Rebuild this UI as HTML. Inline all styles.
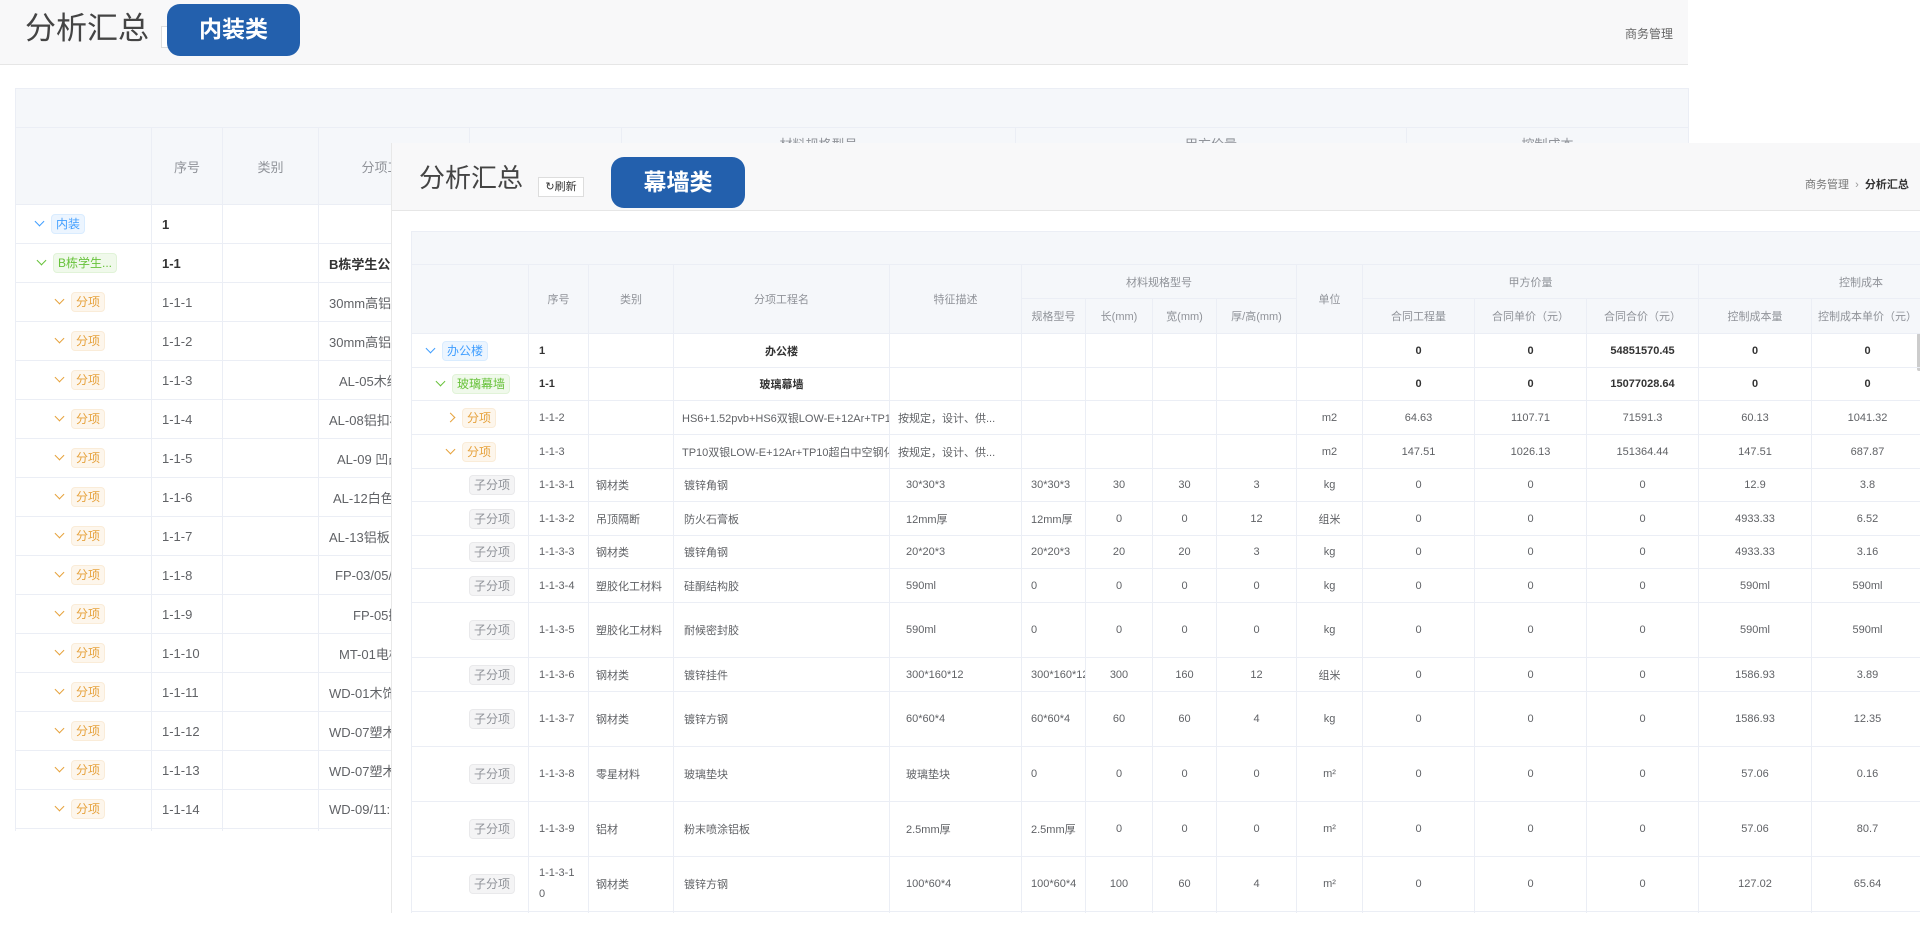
<!DOCTYPE html>
<html><head><meta charset="utf-8">
<style>
*{box-sizing:border-box;margin:0;padding:0}
body{width:1920px;height:928px;overflow:hidden;background:#fff;font-family:"Liberation Sans","Noto Sans CJK SC",sans-serif;position:relative}
.abs{position:absolute}
table{border-collapse:collapse;table-layout:fixed;position:absolute}
td{border:1px solid #ebeef5;text-align:center;vertical-align:middle;white-space:nowrap;overflow:hidden;color:#606266}
.hd td{background:#f5f7fa;color:#909399}
.tag{display:inline-block;border-radius:4px;border:1px solid;padding:0 4px;line-height:18px;font-size:12px}
.tb{background:#ecf5ff;border-color:#d9ecff;color:#409eff}
.tg{background:#f0f9eb;border-color:#e1f3d8;color:#67c23a}
.to{background:#fdf6ec;border-color:#faecd8;color:#e6a23c}
.ti{background:#f4f4f5;border-color:#e9e9eb;color:#909399}
.arr{display:inline-block;width:7px;height:7px;border-right:1.5px solid;border-bottom:1.5px solid;transform:rotate(45deg);margin-right:8px;position:relative;top:-3px}
.arr.r{transform:rotate(-45deg);top:-1px}
.l{text-align:left;padding-left:10px}
#back td{font-size:13px}
#front td{font-size:11px}
.b{font-weight:bold;color:#333}
.tp{vertical-align:top;padding-top:6px}
</style></head><body>

<!-- BACK PANEL -->
<div class="abs" style="left:0;top:0;width:1688px;height:65px;background:#f8f8f9;border-bottom:1px solid #e6e6e6"></div>
<div class="abs" style="left:25px;top:11px;font-size:31px;color:#444;line-height:36px">分析汇总</div>
<div class="abs" style="left:161px;top:26px;width:10px;height:22px;border:1px solid #ddd;background:#fff"></div>
<div class="abs" style="left:167px;top:4px;width:133px;height:52px;background:#2360ad;border-radius:13px;color:#fff;font-size:23px;font-weight:bold;text-align:center;line-height:50px">内装类</div>
<div class="abs" style="left:1625px;top:25px;font-size:12px;color:#666">商务管理</div>

<table id="back" style="left:15px;top:88px;width:1673px">
<colgroup><col style="width:136px"><col style="width:71px"><col style="width:96px"><col style="width:151px"><col style="width:152px"><col style="width:319px"><col style="width:75px"><col style="width:391px"><col style="width:282px"></colgroup>
<tr class="hd" style="height:39px"><td colspan="9" style="border-bottom:1px solid #ebeef5"></td></tr>
<tr class="hd" style="height:38px"><td rowspan="2"></td><td rowspan="2">序号</td><td rowspan="2">类别</td><td rowspan="2">分项工程名</td><td rowspan="2"></td><td colspan="2" class="tp">材料规格型号</td><td class="tp">甲方价量</td><td class="tp">控制成本</td></tr>
<tr class="hd" style="height:39px"><td colspan="2"></td><td></td><td></td></tr>
<tr style="height:39px"><td class="l" style="padding-left:20px"><span class="arr" style="color:#409eff"></span><span class="tag tb">内装</span></td><td class="l b">1</td><td></td><td class="b" style="text-align:right">内装</td><td></td><td></td><td></td><td></td><td></td></tr>
<tr style="height:39px"><td class="l" style="padding-left:22px"><span class="arr" style="color:#67c23a"></span><span class="tag tg">B栋学生...</span></td><td class="l b">1-1</td><td></td><td class="b l">B栋学生公寓</td><td></td><td></td><td></td><td></td><td></td></tr>
<tr style="height:39px"><td class="l" style="padding-left:40px"><span class="arr" style="color:#e6a23c"></span><span class="tag to">分项</span></td><td class="l">1-1-1</td><td></td><td class="l">30mm高铝板</td><td></td><td></td><td></td><td></td><td></td></tr>
<tr style="height:39px"><td class="l" style="padding-left:40px"><span class="arr" style="color:#e6a23c"></span><span class="tag to">分项</span></td><td class="l">1-1-2</td><td></td><td class="l">30mm高铝板</td><td></td><td></td><td></td><td></td><td></td></tr>
<tr style="height:39px"><td class="l" style="padding-left:40px"><span class="arr" style="color:#e6a23c"></span><span class="tag to">分项</span></td><td class="l">1-1-3</td><td></td><td class="l" style="padding-left:20px">AL-05木纹</td><td></td><td></td><td></td><td></td><td></td></tr>
<tr style="height:39px"><td class="l" style="padding-left:40px"><span class="arr" style="color:#e6a23c"></span><span class="tag to">分项</span></td><td class="l">1-1-4</td><td></td><td class="l">AL-08铝扣板</td><td></td><td></td><td></td><td></td><td></td></tr>
<tr style="height:39px"><td class="l" style="padding-left:40px"><span class="arr" style="color:#e6a23c"></span><span class="tag to">分项</span></td><td class="l">1-1-5</td><td></td><td class="l" style="padding-left:18px">AL-09 凹凸</td><td></td><td></td><td></td><td></td><td></td></tr>
<tr style="height:39px"><td class="l" style="padding-left:40px"><span class="arr" style="color:#e6a23c"></span><span class="tag to">分项</span></td><td class="l">1-1-6</td><td></td><td class="l" style="padding-left:14px">AL-12白色</td><td></td><td></td><td></td><td></td><td></td></tr>
<tr style="height:39px"><td class="l" style="padding-left:40px"><span class="arr" style="color:#e6a23c"></span><span class="tag to">分项</span></td><td class="l">1-1-7</td><td></td><td class="l">AL-13铝板</td><td></td><td></td><td></td><td></td><td></td></tr>
<tr style="height:39px"><td class="l" style="padding-left:40px"><span class="arr" style="color:#e6a23c"></span><span class="tag to">分项</span></td><td class="l">1-1-8</td><td></td><td class="l" style="padding-left:16px">FP-03/05/</td><td></td><td></td><td></td><td></td><td></td></tr>
<tr style="height:39px"><td class="l" style="padding-left:40px"><span class="arr" style="color:#e6a23c"></span><span class="tag to">分项</span></td><td class="l">1-1-9</td><td></td><td class="l" style="padding-left:34px">FP-05抛</td><td></td><td></td><td></td><td></td><td></td></tr>
<tr style="height:39px"><td class="l" style="padding-left:40px"><span class="arr" style="color:#e6a23c"></span><span class="tag to">分项</span></td><td class="l">1-1-10</td><td></td><td class="l" style="padding-left:20px">MT-01电梯</td><td></td><td></td><td></td><td></td><td></td></tr>
<tr style="height:39px"><td class="l" style="padding-left:40px"><span class="arr" style="color:#e6a23c"></span><span class="tag to">分项</span></td><td class="l">1-1-11</td><td></td><td class="l">WD-01木饰</td><td></td><td></td><td></td><td></td><td></td></tr>
<tr style="height:39px"><td class="l" style="padding-left:40px"><span class="arr" style="color:#e6a23c"></span><span class="tag to">分项</span></td><td class="l">1-1-12</td><td></td><td class="l">WD-07塑木</td><td></td><td></td><td></td><td></td><td></td></tr>
<tr style="height:39px"><td class="l" style="padding-left:40px"><span class="arr" style="color:#e6a23c"></span><span class="tag to">分项</span></td><td class="l">1-1-13</td><td></td><td class="l">WD-07塑木</td><td></td><td></td><td></td><td></td><td></td></tr>
<tr style="height:39px"><td class="l" style="padding-left:40px"><span class="arr" style="color:#e6a23c"></span><span class="tag to">分项</span></td><td class="l">1-1-14</td><td></td><td class="l">WD-09/11:</td><td></td><td></td><td></td><td></td><td></td></tr>
<tr style="height:15px"><td></td><td></td><td></td><td></td><td></td><td></td><td></td><td></td><td></td></tr>
</table>
<div class="abs" style="left:0;top:831px;width:1700px;height:97px;background:#fff"></div>

<!-- FRONT PANEL -->
<div class="abs" style="left:391px;top:143px;width:1529px;height:771px;background:#fff;border-left:1px solid #e8e8e8;overflow:hidden">
 <div class="abs" style="left:0;top:0;width:1529px;height:68px;background:#f8f8f9;border-bottom:1px solid #e6e6e6"></div>
 <div class="abs" style="left:27px;top:19px;font-size:26px;color:#444;line-height:32px">分析汇总</div>
 <div class="abs" style="left:146px;top:34px;width:46px;height:20px;border:1px solid #ddd;background:#fff;font-size:11px;color:#333;line-height:18px;text-align:center">&#x21bb;刷新</div>
 <div class="abs" style="left:219px;top:14px;width:134px;height:51px;background:#2360ad;border-radius:13px;color:#fff;font-size:23px;font-weight:bold;text-align:center;line-height:50px">幕墙类</div>
 <div class="abs" style="left:1413px;top:33px;font-size:11px;color:#777">商务管理&nbsp;&nbsp;<span style="color:#999">›</span>&nbsp;&nbsp;<b style="color:#333">分析汇总</b></div>
 <div class="abs" style="left:1525px;top:190px;width:4px;height:38px;background:#ccc;border-radius:2px"></div>

<table id="front" style="left:19px;top:88px;width:1620px">
<colgroup><col style="width:117px"><col style="width:60px"><col style="width:85px"><col style="width:216px"><col style="width:132px"><col style="width:64px"><col style="width:67px"><col style="width:64px"><col style="width:80px"><col style="width:66px"><col style="width:112px"><col style="width:112px"><col style="width:112px"><col style="width:113px"><col style="width:112px"><col style="width:108px"></colgroup>
<tr class="hd" style="height:33px"><td colspan="16"></td></tr>
<tr class="hd" style="height:34px"><td rowspan="2"></td><td rowspan="2">序号</td><td rowspan="2">类别</td><td rowspan="2">分项工程名</td><td rowspan="2">特征描述</td><td colspan="4">材料规格型号</td><td rowspan="2">单位</td><td colspan="3">甲方价量</td><td colspan="3" style="text-align:left;padding-left:140px">控制成本</td></tr>
<tr class="hd" style="height:35px"><td>规格型号</td><td>长(mm)</td><td>宽(mm)</td><td>厚/高(mm)</td><td>合同工程量</td><td>合同单价（元）</td><td>合同合价（元）</td><td>控制成本量</td><td>控制成本单价（元）</td><td></td></tr>
<tr style="height:34px"><td class="l" style="padding-left:15px"><span class="arr" style="color:#409eff"></span><span class="tag tb">办公楼</span></td><td class="l b">1</td><td></td><td class="b">办公楼</td><td></td><td></td><td></td><td></td><td></td><td></td><td class="b">0</td><td class="b">0</td><td class="b">54851570.45</td><td class="b">0</td><td class="b">0</td><td></td></tr>
<tr style="height:33px"><td class="l" style="padding-left:25px"><span class="arr" style="color:#67c23a"></span><span class="tag tg">玻璃幕墙</span></td><td class="l b">1-1</td><td></td><td class="b">玻璃幕墙</td><td></td><td></td><td></td><td></td><td></td><td></td><td class="b">0</td><td class="b">0</td><td class="b">15077028.64</td><td class="b">0</td><td class="b">0</td><td></td></tr>
<tr style="height:34px"><td class="l" style="padding-left:35px"><span class="arr r" style="color:#e6a23c"></span><span class="tag to">分项</span></td><td class="l">1-1-2</td><td></td><td class="l" style="padding-left:8px">HS6+1.52pvb+HS6双银LOW-E+12Ar+TP10</td><td class="l" style="padding-left:8px">按规定，设计、供...</td><td></td><td></td><td></td><td></td><td>m2</td><td>64.63</td><td>1107.71</td><td>71591.3</td><td>60.13</td><td>1041.32</td><td></td></tr>
<tr style="height:34px"><td class="l" style="padding-left:35px"><span class="arr" style="color:#e6a23c"></span><span class="tag to">分项</span></td><td class="l">1-1-3</td><td></td><td class="l" style="padding-left:8px">TP10双银LOW-E+12Ar+TP10超白中空钢化</td><td class="l" style="padding-left:8px">按规定，设计、供...</td><td></td><td></td><td></td><td></td><td>m2</td><td>147.51</td><td>1026.13</td><td>151364.44</td><td>147.51</td><td>687.87</td><td></td></tr>
<tr style="height:33px"><td class="l" style="padding-left:57px"><span class="tag ti">子分项</span></td><td class="l">1-1-3-1</td><td class="l" style="padding-left:7px">钢材类</td><td class="l">镀锌角钢</td><td class="l" style="padding-left:16px">30*30*3</td><td class="l" style="padding-left:9px">30*30*3</td><td>30</td><td>30</td><td>3</td><td>kg</td><td>0</td><td>0</td><td>0</td><td>12.9</td><td>3.8</td><td></td></tr>
<tr style="height:34px"><td class="l" style="padding-left:57px"><span class="tag ti">子分项</span></td><td class="l">1-1-3-2</td><td class="l" style="padding-left:7px">吊顶隔断</td><td class="l">防火石膏板</td><td class="l" style="padding-left:16px">12mm厚</td><td class="l" style="padding-left:9px">12mm厚</td><td>0</td><td>0</td><td>12</td><td>组米</td><td>0</td><td>0</td><td>0</td><td>4933.33</td><td>6.52</td><td></td></tr>
<tr style="height:33px"><td class="l" style="padding-left:57px"><span class="tag ti">子分项</span></td><td class="l">1-1-3-3</td><td class="l" style="padding-left:7px">钢材类</td><td class="l">镀锌角钢</td><td class="l" style="padding-left:16px">20*20*3</td><td class="l" style="padding-left:9px">20*20*3</td><td>20</td><td>20</td><td>3</td><td>kg</td><td>0</td><td>0</td><td>0</td><td>4933.33</td><td>3.16</td><td></td></tr>
<tr style="height:34px"><td class="l" style="padding-left:57px"><span class="tag ti">子分项</span></td><td class="l">1-1-3-4</td><td class="l" style="padding-left:7px">塑胶化工材料</td><td class="l">硅酮结构胶</td><td class="l" style="padding-left:16px">590ml</td><td class="l" style="padding-left:9px">0</td><td>0</td><td>0</td><td>0</td><td>kg</td><td>0</td><td>0</td><td>0</td><td>590ml</td><td>590ml</td><td></td></tr>
<tr style="height:55px"><td class="l" style="padding-left:57px"><span class="tag ti">子分项</span></td><td class="l">1-1-3-5</td><td class="l" style="padding-left:7px">塑胶化工材料</td><td class="l">耐候密封胶</td><td class="l" style="padding-left:16px">590ml</td><td class="l" style="padding-left:9px">0</td><td>0</td><td>0</td><td>0</td><td>kg</td><td>0</td><td>0</td><td>0</td><td>590ml</td><td>590ml</td><td></td></tr>
<tr style="height:34px"><td class="l" style="padding-left:57px"><span class="tag ti">子分项</span></td><td class="l">1-1-3-6</td><td class="l" style="padding-left:7px">钢材类</td><td class="l">镀锌挂件</td><td class="l" style="padding-left:16px">300*160*12</td><td class="l" style="padding-left:9px">300*160*12</td><td>300</td><td>160</td><td>12</td><td>组米</td><td>0</td><td>0</td><td>0</td><td>1586.93</td><td>3.89</td><td></td></tr>
<tr style="height:55px"><td class="l" style="padding-left:57px"><span class="tag ti">子分项</span></td><td class="l">1-1-3-7</td><td class="l" style="padding-left:7px">钢材类</td><td class="l">镀锌方钢</td><td class="l" style="padding-left:16px">60*60*4</td><td class="l" style="padding-left:9px">60*60*4</td><td>60</td><td>60</td><td>4</td><td>kg</td><td>0</td><td>0</td><td>0</td><td>1586.93</td><td>12.35</td><td></td></tr>
<tr style="height:55px"><td class="l" style="padding-left:57px"><span class="tag ti">子分项</span></td><td class="l">1-1-3-8</td><td class="l" style="padding-left:7px">零星材料</td><td class="l">玻璃垫块</td><td class="l" style="padding-left:16px">玻璃垫块</td><td class="l" style="padding-left:9px">0</td><td>0</td><td>0</td><td>0</td><td>m²</td><td>0</td><td>0</td><td>0</td><td>57.06</td><td>0.16</td><td></td></tr>
<tr style="height:55px"><td class="l" style="padding-left:57px"><span class="tag ti">子分项</span></td><td class="l">1-1-3-9</td><td class="l" style="padding-left:7px">铝材</td><td class="l">粉末喷涂铝板</td><td class="l" style="padding-left:16px">2.5mm厚</td><td class="l" style="padding-left:9px">2.5mm厚</td><td>0</td><td>0</td><td>0</td><td>m²</td><td>0</td><td>0</td><td>0</td><td>57.06</td><td>80.7</td><td></td></tr>
<tr style="height:55px"><td class="l" style="padding-left:57px"><span class="tag ti">子分项</span></td><td class="l" style="white-space:normal;line-height:21px">1-1-3-1<br>0</td><td class="l" style="padding-left:7px">钢材类</td><td class="l">镀锌方钢</td><td class="l" style="padding-left:16px">100*60*4</td><td class="l" style="padding-left:9px">100*60*4</td><td>100</td><td>60</td><td>4</td><td>m²</td><td>0</td><td>0</td><td>0</td><td>127.02</td><td>65.64</td><td></td></tr>
<tr style="height:30px"><td></td><td></td><td></td><td></td><td></td><td></td><td></td><td></td><td></td><td></td><td></td><td></td><td></td><td></td><td></td><td></td></tr>
</table>
</div>
<div class="abs" style="left:391px;top:913px;width:1529px;height:15px;background:#fff"></div>
</body></html>
